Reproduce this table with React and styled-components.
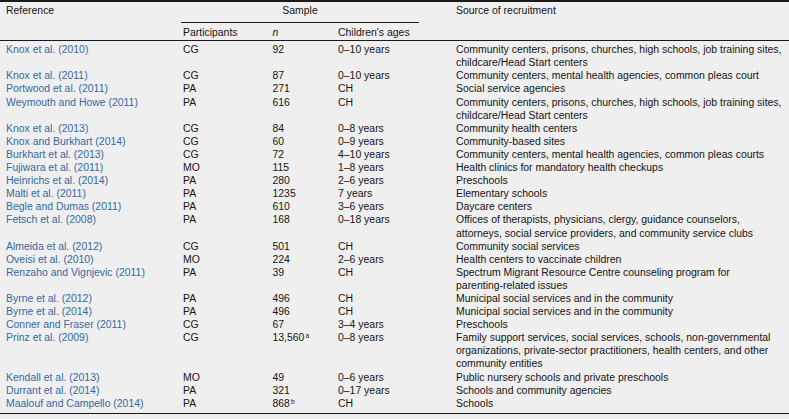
import React from "react";
import styled, { createGlobalStyle } from "styled-components";

const GlobalStyle = createGlobalStyle`
  html, body {
    margin: 0;
    padding: 0;
    background: #efefef;
  }
`;

const Table = styled.table`
  width: 789px;
  table-layout: fixed;
  border-collapse: collapse;
  border-top: 2px solid #1a1a1a;
  border-bottom: 1.5px solid #1a1a1a;
  font-family: "Liberation Sans", Arial, sans-serif;
  font-size: 10.45px;
  line-height: 13.1px;
  color: #151515;
`;

const HeadCell = styled.th`
  font-weight: normal;
  text-align: left;
  vertical-align: top;
  padding: ${(p) => (p.$second ? "3px 0 1.5px 2px" : "1.5px 0 0 2px")};
  padding-left: ${(p) => (p.$first ? "6px" : "2px")};
  border-bottom: ${(p) => (p.$ruled ? "1.5px solid #1a1a1a" : "none")};
`;

const GroupRule = styled.div`
  margin-left: -2px;
  margin-right: 35px;
  padding-bottom: 5px;
  border-bottom: 1px solid #1a1a1a;
  text-align: center;
`;

const Cell = styled.td`
  vertical-align: top;
  padding: 0 0 0 ${(p) => (p.$first ? "6px" : "2px")};
  padding-top: ${(p) => (p.$top ? "2px" : "0")};
  padding-bottom: ${(p) => (p.$bottom ? "3px" : "0")};
  white-space: nowrap;
`;

const RefLink = styled.a`
  color: #3569a3;
  text-decoration: none;
`;

const Note = styled.sup`
  font-size: 6.5px;
  line-height: 0;
  vertical-align: 3px;
  margin-left: 1px;
`;

const Line = styled.div``;

const rows = [
  { ref: "Knox et al. (2010)", p: "CG", n: "92", age: "0–10 years", src: ["Community centers, prisons, churches, high schools, job training sites,", "childcare/Head Start centers"] },
  { ref: "Knox et al. (2011)", p: "CG", n: "87", age: "0–10 years", src: ["Community centers, mental health agencies, common pleas court"] },
  { ref: "Portwood et al. (2011)", p: "PA", n: "271", age: "CH", src: ["Social service agencies"] },
  { ref: "Weymouth and Howe (2011)", p: "PA", n: "616", age: "CH", src: ["Community centers, prisons, churches, high schools, job training sites,", "childcare/Head Start centers"] },
  { ref: "Knox et al. (2013)", p: "CG", n: "84", age: "0–8 years", src: ["Community health centers"] },
  { ref: "Knox and Burkhart (2014)", p: "CG", n: "60", age: "0–9 years", src: ["Community-based sites"] },
  { ref: "Burkhart et al. (2013)", p: "CG", n: "72", age: "4–10 years", src: ["Community centers, mental health agencies, common pleas courts"] },
  { ref: "Fujiwara et al. (2011)", p: "MO", n: "115", age: "1–8 years", src: ["Health clinics for mandatory health checkups"] },
  { ref: "Heinrichs et al. (2014)", p: "PA", n: "280", age: "2–6 years", src: ["Preschools"] },
  { ref: "Malti et al. (2011)", p: "PA", n: "1235", age: "7 years", src: ["Elementary schools"] },
  { ref: "Begle and Dumas (2011)", p: "PA", n: "610", age: "3–6 years", src: ["Daycare centers"] },
  { ref: "Fetsch et al. (2008)", p: "PA", n: "168", age: "0–18 years", src: ["Offices of therapists, physicians, clergy, guidance counselors,", "attorneys, social service providers, and community service clubs"] },
  { ref: "Almeida et al. (2012)", p: "CG", n: "501", age: "CH", src: ["Community social services"] },
  { ref: "Oveisi et al. (2010)", p: "MO", n: "224", age: "2–6 years", src: ["Health centers to vaccinate children"] },
  { ref: "Renzaho and Vignjevic (2011)", p: "PA", n: "39", age: "CH", src: ["Spectrum Migrant Resource Centre counseling program for", "parenting-related issues"] },
  { ref: "Byrne et al. (2012)", p: "PA", n: "496", age: "CH", src: ["Municipal social services and in the community"] },
  { ref: "Byrne et al. (2014)", p: "PA", n: "496", age: "CH", src: ["Municipal social services and in the community"] },
  { ref: "Conner and Fraser (2011)", p: "CG", n: "67", age: "3–4 years", src: ["Preschools"] },
  { ref: "Prinz et al. (2009)", p: "CG", n: "13,560", note: "a", age: "0–8 years", src: ["Family support services, social services, schools, non-governmental", "organizations, private-sector practitioners, health centers, and other", "community entities"] },
  { ref: "Kendall et al. (2013)", p: "MO", n: "49", age: "0–6 years", src: ["Public nursery schools and private preschools"] },
  { ref: "Durrant et al. (2014)", p: "PA", n: "321", age: "0–17 years", src: ["Schools and community agencies"] },
  { ref: "Maalouf and Campello (2014)", p: "PA", n: "868", note: "b", age: "CH", src: ["Schools"] },
];

function App() {
  return (
    <>
      <GlobalStyle />
      <Table>
        <colgroup>
          <col style={{ width: 181 }} />
          <col style={{ width: 89.5 }} />
          <col style={{ width: 65.5 }} />
          <col style={{ width: 118 }} />
          <col />
        </colgroup>
        <thead>
          <tr>
            <HeadCell $first $ruled rowSpan={2}>Reference</HeadCell>
            <HeadCell colSpan={3}>
              <GroupRule>Sample</GroupRule>
            </HeadCell>
            <HeadCell $ruled rowSpan={2}>Source of recruitment</HeadCell>
          </tr>
          <tr>
            <HeadCell $second $ruled>Participants</HeadCell>
            <HeadCell $second $ruled><i>n</i></HeadCell>
            <HeadCell $second $ruled>Children's ages</HeadCell>
          </tr>
        </thead>
        <tbody>
          {rows.map((row, i) => {
            const top = i === 0;
            const bottom = i === rows.length - 1;
            return (
              <tr key={row.ref + i}>
                <Cell $first $top={top} $bottom={bottom}>
                  <RefLink href="#">{row.ref}</RefLink>
                </Cell>
                <Cell $top={top} $bottom={bottom}>{row.p}</Cell>
                <Cell $top={top} $bottom={bottom}>
                  {row.n}
                  {row.note && <Note>{row.note}</Note>}
                </Cell>
                <Cell $top={top} $bottom={bottom}>{row.age}</Cell>
                <Cell $top={top} $bottom={bottom}>
                  {row.src.map((line) => (
                    <Line key={line}>{line}</Line>
                  ))}
                </Cell>
              </tr>
            );
          })}
        </tbody>
      </Table>
    </>
  );
}

export default App;
